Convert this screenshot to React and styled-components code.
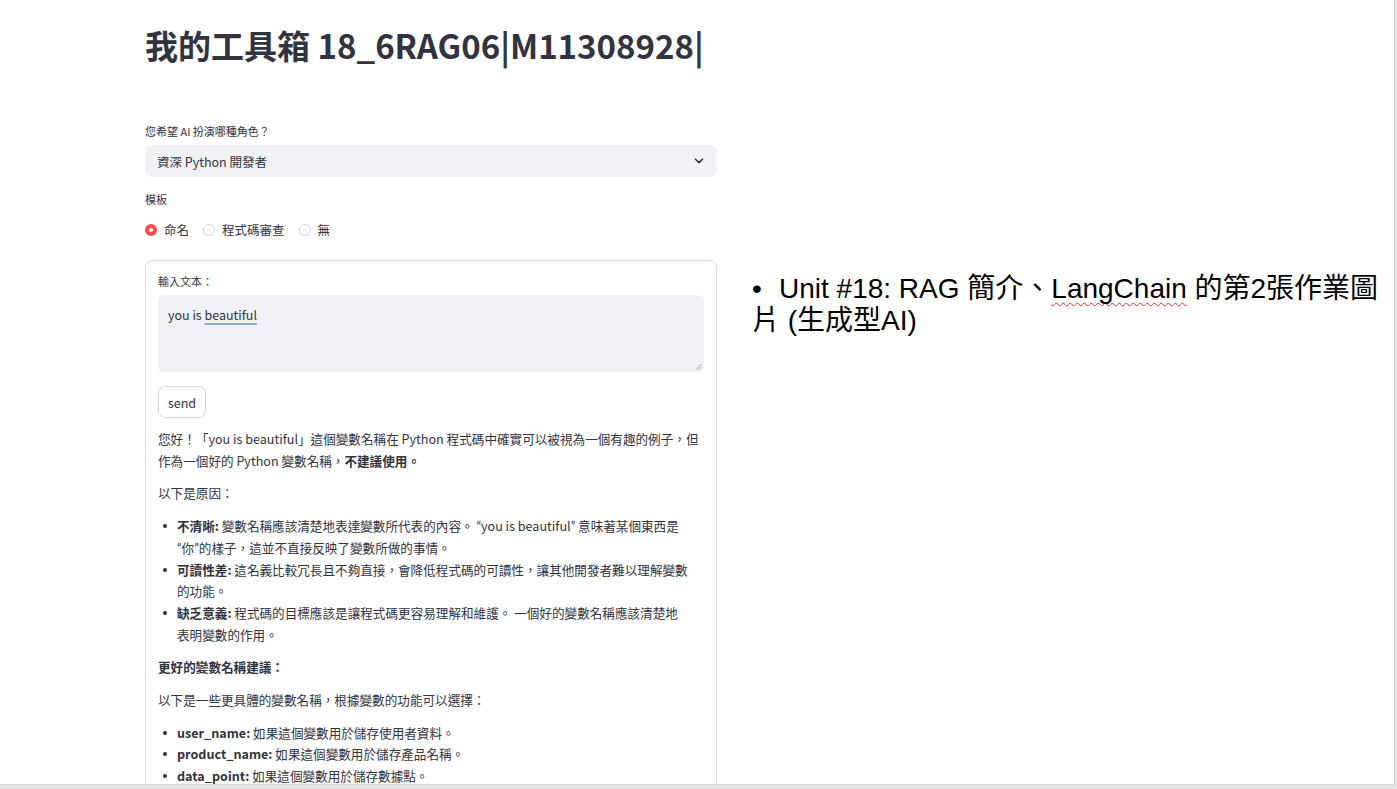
import React from "react";
import styled, { createGlobalStyle } from "styled-components";

const GlobalStyle = createGlobalStyle`
  html, body {
    margin: 0;
    padding: 0;
    background: #e4e4e4;
  }
  * {
    box-sizing: border-box;
  }
`;

const CJK = `"Noto Sans CJK TC", "Noto Sans", sans-serif`;

function Radio({ checked, label }) {
  return (
    <RadioItem>
      <RadioDot checked={checked} />
      <RadioLabel>{label}</RadioLabel>
    </RadioItem>
  );
}

function Bullet({ title, children }) {
  return (
    <BulletItem>
      <strong>{title}</strong> {children}
    </BulletItem>
  );
}

function App() {
  return (
    <>
      <GlobalStyle />
      <Slide>
        <LeftColumn>
          <Title>我的工具箱 18_6RAG06|M11308928|</Title>

          <FieldLabel>您希望 AI 扮演哪種角色？</FieldLabel>
          <Select>
            <span>資深 Python 開發者</span>
            <svg width="10" height="6" viewBox="0 0 10 6">
              <polyline
                points="1.5,1.2 5,4.6 8.5,1.2"
                fill="none"
                stroke="#31333f"
                strokeWidth="1.6"
                strokeLinecap="round"
                strokeLinejoin="round"
              />
            </svg>
          </Select>

          <FieldLabel $top={14}>模板</FieldLabel>
          <RadioRow>
            <Radio checked label="命名" />
            <Radio label="程式碼審查" />
            <Radio label="無" />
          </RadioRow>

          <Form>
            <FieldLabel $top={0}>輸入文本：</FieldLabel>
            <TextArea>
              you is <Spell>beautiful</Spell>
              <Grip width="7" height="7" viewBox="0 0 7 7">
                <line x1="1" y1="6.5" x2="6.5" y2="1" stroke="#8a8c94" strokeWidth="0.8" />
                <line x1="4" y1="6.5" x2="6.5" y2="4" stroke="#8a8c94" strokeWidth="0.8" />
              </Grip>
            </TextArea>
            <SendButton>send</SendButton>

            <Answer>
              <Para>
                您好！「you is beautiful」這個變數名稱在 Python 程式碼中確實可以被視為一個有趣的例子，但
                <br />
                作為一個好的 Python 變數名稱，<strong>不建議使用。</strong>
              </Para>
              <Para>以下是原因：</Para>
              <BulletList>
                <Bullet title="不清晰:">
                  變數名稱應該清楚地表達變數所代表的內容。 <Q>“</Q>you is beautiful<Q>”</Q> 意味著某個東西是
                  <br />
                  <Q>“</Q>你<Q>”</Q>的樣子，這並不直接反映了變數所做的事情。
                </Bullet>
                <Bullet title="可讀性差:">
                  這名義比較冗長且不夠直接，會降低程式碼的可讀性，讓其他開發者難以理解變數
                  <br />
                  的功能。
                </Bullet>
                <Bullet title="缺乏意義:">
                  程式碼的目標應該是讓程式碼更容易理解和維護。 一個好的變數名稱應該清楚地
                  <br />
                  表明變數的作用。
                </Bullet>
              </BulletList>
              <Para>
                <strong>更好的變數名稱建議：</strong>
              </Para>
              <Para>以下是一些更具體的變數名稱，根據變數的功能可以選擇：</Para>
              <BulletList>
                <Bullet title="user_name:">如果這個變數用於儲存使用者資料。</Bullet>
                <Bullet title="product_name:">如果這個變數用於儲存產品名稱。</Bullet>
                <Bullet title="data_point:">如果這個變數用於儲存數據點。</Bullet>
              </BulletList>
            </Answer>
          </Form>
        </LeftColumn>

        <RightColumn>
          <SlideText>
            <Dot>•</Dot>Unit #18: RAG 簡介、<Squiggle>LangChain</Squiggle> 的第2張作業圖片 (生成型AI)
          </SlideText>
        </RightColumn>
      </Slide>
    </>
  );
}

const Slide = styled.div`
  display: flex;
  align-items: flex-start;
  width: 1395px;
  height: 785px;
  background: #ffffff;
  border-right: 1px solid #d2d2d2;
  border-bottom: 1px solid #d2d2d2;
  overflow: hidden;
`;

const LeftColumn = styled.div`
  display: flex;
  flex-direction: column;
  flex-shrink: 0;
  width: 572px;
  margin-left: 145px;
  padding-top: 25px;
  font-family: ${CJK};
  color: #31333f;

  & > * {
    flex-shrink: 0;
  }
`;

const Title = styled.h1`
  margin: 0;
  font-size: 33px;
  line-height: 41px;
  font-weight: 700;
  color: #31333f;
  white-space: nowrap;
`;

const FieldLabel = styled.div`
  margin-top: ${(p) => (p.$top === undefined ? 57 : p.$top)}px;
  font-size: 11px;
  line-height: 16px;
  color: #31333f;
`;

const Select = styled.div`
  display: flex;
  align-items: center;
  justify-content: space-between;
  height: 32px;
  margin-top: 6px;
  padding: 0 12px 0 12px;
  background: #f0f2f6;
  border-radius: 6px;
  font-size: 12.5px;

  svg {
    margin-right: 1px;
  }
`;

const RadioRow = styled.div`
  display: flex;
  align-items: center;
  gap: 14px;
  height: 16px;
  margin-top: 15px;
`;

const RadioItem = styled.div`
  display: flex;
  align-items: center;
  gap: 7px;
  font-size: 12.5px;
  line-height: 16px;
`;

const RadioDot = styled.span`
  width: 12px;
  height: 12px;
  border-radius: 50%;
  background: #fff;
  border: ${(p) => (p.checked ? "4px solid #ff4b4b" : "1px solid #d4d5d9")};
`;

const RadioLabel = styled.span``;

const Form = styled.div`
  display: flex;
  flex-direction: column;
  margin-top: 22px;
  padding: 12px 12px 20px 12px;
  border: 1px solid #dcdde1;
  border-radius: 7px;

  & > * {
    flex-shrink: 0;
  }
`;

const TextArea = styled.div`
  position: relative;
  height: 77px;
  margin-top: 6px;
  padding: 12px 10px;
  background: #f0f2f6;
  border-radius: 6px;
  font-size: 12.5px;
  line-height: 16px;
`;

const Spell = styled.span`
  text-decoration: underline;
  text-decoration-color: #8fa9dc;
  text-decoration-thickness: 1.5px;
  text-underline-offset: 3px;
`;

const Grip = styled.svg`
  position: absolute;
  right: 2px;
  bottom: 2px;
`;

const SendButton = styled.button`
  align-self: flex-start;
  width: 48px;
  height: 32px;
  margin-top: 14px;
  padding: 0;
  background: #fff;
  border: 1px solid #d6d7db;
  border-radius: 7px;
  font-family: ${CJK};
  font-size: 12.5px;
  color: #31333f;
`;

const Answer = styled.div`
  margin-top: 10px;
  margin-right: -12px;
  font-size: 12.6px;
  line-height: 21.7px;
  color: #31333f;

  strong {
    font-weight: 700;
  }
`;

const Q = styled.span`
  font-family: "Lato", "Liberation Sans", sans-serif;
  line-height: 1;
`;

const Para = styled.p`
  margin: 0 0 11px 0;
`;

const BulletList = styled.ul`
  margin: 0 0 11px 0;
  padding: 0 0 0 19px;
  list-style: none;
`;

const BulletItem = styled.li`
  position: relative;

  &::before {
    content: "";
    position: absolute;
    left: -14px;
    top: 9px;
    width: 4px;
    height: 4px;
    border-radius: 50%;
    background: #31333f;
  }
`;

const RightColumn = styled.div`
  width: 636px;
  margin-left: 35px;
  padding-top: 273px;
`;

const SlideText = styled.div`
  font-family: "Liberation Sans", "Noto Sans CJK TC", sans-serif;
  font-size: 28px;
  line-height: 32px;
  color: #000;
`;

const Dot = styled.span`
  display: inline-block;
  width: 27px;
`;

const Squiggle = styled.span`
  text-decoration: underline wavy #e0322c;
  text-decoration-thickness: 1px;
  text-decoration-skip-ink: none;
  text-underline-offset: 4px;
`;

export default App;
